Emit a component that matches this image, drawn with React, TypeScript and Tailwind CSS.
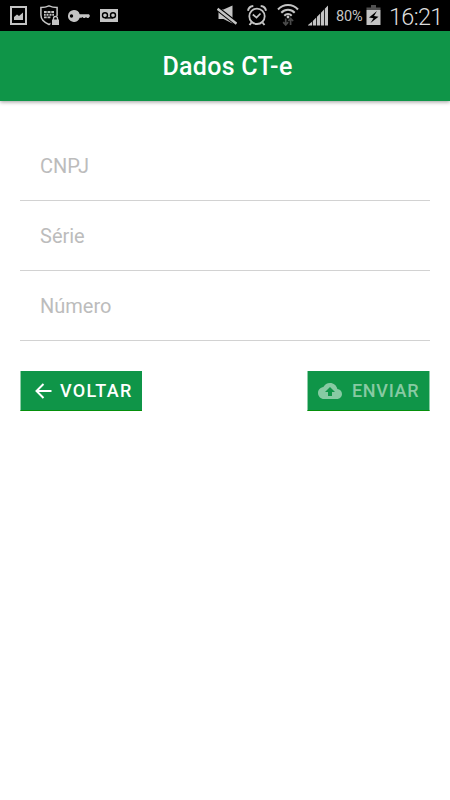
import * as React from "react";

const FIELDS = [
  { name: "cnpj", label: "CNPJ" },
  { name: "serie", label: "Série" },
  { name: "numero", label: "Número" },
];

function StatusBar() {
  return (
    <div className="flex h-[31px] items-start bg-black text-[#c4c4c4]">
      {/* notifications */}
      <svg className="ml-[10px] mt-[6px] h-[19px] w-[17px]" viewBox="0 0 17 19">
        <path d="M1 1h15v17H1z" fill="none" stroke="currentColor" strokeWidth="2" />
        <path d="M4 14V11l3-2.500 2 1.500 4-3.500V14z" fill="currentColor" />
      </svg>
      <svg className="ml-[13px] mt-[5px] h-[21px] w-[20px]" viewBox="0 0 20 21">
        <path
          d="M9 .9C6.500 2 3.500 2.500 .9 2.500V10c0 4 3.500 7.500 8.100 9.500 4.600-2 8.100-5.500 8.100-9.500V2.500C14.500 2.500 11.500 2 9 .9z"
          fill="none"
          stroke="currentColor"
          strokeWidth="1.500"
        />
        <path
          d="M4 6h2.700v2H4zM7.500 6h3v2h-3zM11.300 6H14v2h-2.700zM4 8.700h1.700v2H4zM6.500 8.700h2v2h-2zM9.500 8.700h2v2h-2zM12.300 8.700H14v2h-1.700zM4 11.400h2.700v1.800H4zM7.500 11.400h3v1.800h-3z"
          fill="currentColor"
        />
        <path d="M10.500 12.500h1.500v-1.500h6v2.500h2V21h-9.500z" fill="#000" />
        <path d="M12 14.500h7v5.500h-7z" fill="currentColor" />
        <path d="M13.500 15v-1.500a2 2 0 0 1 4 0V15" fill="none" stroke="currentColor" strokeWidth="1.300" />
      </svg>
      <svg className="ml-[8px] mt-[10px] h-[12px] w-[22px]" viewBox="0 0 22 12">
        <path
          fillRule="evenodd"
          d="M6 0a6 6 0 0 1 5.700 4.200H21L22 6l-1.500 2H19l-1-1-1 1h-1.500l-1-1-1 .8h-1.800A6 6 0 1 1 6 0zM3.500 4.300a1.700 1.700 0 1 0 0 3.400 1.700 1.700 0 0 0 0-3.400z"
          fill="currentColor"
        />
      </svg>
      <svg className="ml-[10px] mt-[9px] h-[13px] w-[18px]" viewBox="0 0 18 13">
        <path d="M0 0h18v13H0z" fill="currentColor" />
        <g fill="none" stroke="#000" strokeWidth="1.400">
          <circle cx="5" cy="6.300" r="2.500" />
          <circle cx="13" cy="6.300" r="2.500" />
          <path d="M5 8.900h8" />
        </g>
      </svg>

      {/* system */}
      <svg className="ml-[99px] mt-[5px] h-[21px] w-[20px]" viewBox="0 0 20 21">
        <path d="M1.500 4.500h5L15.500 .5V18.500L6.500 14h-5z" fill="currentColor" />
        <path d="M0 3.300L20 19" stroke="#000" strokeWidth="4.600" />
        <path d="M.5 3.800L19.500 18.700" stroke="currentColor" strokeWidth="2.400" />
      </svg>
      <svg className="ml-[10px] mt-[5px] h-[21px] w-[20px]" viewBox="0 0 20 21" fill="none" stroke="currentColor">
        <circle cx="10" cy="11.300" r="7.700" strokeWidth="1.800" />
        <path d="M5.800 9.500L9.500 12.500l4-4" strokeWidth="1.700" />
        <path d="M1 5.800C1.500 3 3.500 1.200 6.300 1M19 5.800C18.500 3 16.500 1.200 13.700 1M4.500 17.500L2.500 20M15.500 17.500l2 2.500" strokeWidth="2" />
      </svg>
      <svg className="ml-[10px] mt-[4px] h-[22px] w-[22px]" viewBox="0 0 22 22" fill="none">
        <g stroke="currentColor" strokeWidth="2">
          <path d="M1 5.500C6.500-.5 15.500-.5 21 5.500" />
          <path d="M4.300 8.700c3.800-4 9.600-4 13.400 0" />
          <path d="M7.300 11.700c2.200-2.200 5.200-2.200 7.400 0" />
        </g>
        <circle cx="11" cy="13" r="1.400" fill="currentColor" />
        <path d="M8.700 14.500v6.200M6.200 18.200l2.500 2.700 2.500-2.700M13.600 21v-6.200M11.300 17l2.300-2.600 2.500 2.600" stroke="#4a4a4a" strokeWidth="1.700" />
      </svg>
      <svg className="ml-[9px] mt-[5px] h-[21px] w-[20px]" viewBox="0 0 20 21">
        <path
          d="M0 20.500h4v-3.800l-4 3.300zM4.800 20.500h3.400v-8l-3.400 3.500zM9 20.500h3.200V8.500L9 11.700zM13 20.500h3V4.500l-3 3.200zM16.800 20.500H20V.5l-3.200 3.300z"
          fill="currentColor"
        />
      </svg>
      <span className="ml-[8px] mt-[7px] w-[28px] whitespace-nowrap font-[Roboto] text-[14.500px] leading-[19px] tracking-[-0.1px]">
        80%
      </span>
      <svg className="ml-[2px] mt-[5px] h-[20px] w-[15px]" viewBox="0 0 15 20">
        <path d="M5 0h5v2.500h4.500V5H.5V2.500H5z" fill="#505050" />
        <path d="M.5 5h14v15H.5z" fill="currentColor" />
        <path d="M11 6L3 12.500l4.500 .8-3 4.700 8-6.300-4.500-.8z" fill="#000" />
      </svg>
      <span className="ml-[8px] mt-[3px] whitespace-nowrap font-[Roboto] text-[23.500px] font-light leading-[28px] tracking-[-0.7px] text-[#dcdcdc]">
        16:21
      </span>
    </div>
  );
}

export default function App() {
  const [values, setValues] = React.useState<Record<string, string>>({});
  const complete = FIELDS.every((f) => values[f.name]);

  return (
    <main className="min-h-screen bg-white font-[Roboto,sans-serif]">
      <StatusBar />
      <header className="flex h-[70px] items-center justify-center bg-[#0f9548] pl-[5px] pt-[2px] shadow-[0_1px_4px_rgba(0,0,0,0.4)]">
        <h1 className="text-[25px] font-medium leading-[30px] tracking-[0.3px] text-white">Dados CT-e</h1>
      </header>

      <form className="px-5 pt-[30px]" onSubmit={(e) => e.preventDefault()}>
        {FIELDS.map((f) => (
          <input
            key={f.name}
            className="block h-[70px] w-full border-b border-[#d2d2d2] px-5 text-xl text-[#333] outline-none placeholder:text-[#bcbcbc]"
            placeholder={f.label}
            aria-label={f.label}
            value={values[f.name] ?? ""}
            onChange={(e) => setValues({ ...values, [f.name]: e.target.value })}
          />
        ))}

        <div className="mt-[30px] flex justify-between">
          <button
            type="button"
            className="flex h-10 w-[122px] items-center border-b border-l border-b-[#05900b] border-l-[#8fcea8] bg-[#0f9548] pl-[14px] text-lg font-medium tracking-[1.3px] text-white"
          >
            <svg className="mr-2 h-4 w-[17px] shrink-0" viewBox="0 0 17 16" fill="none" stroke="currentColor" strokeWidth="2">
              <path d="M16.500 8H1.800M8.500 1L1.500 8l7 7" />
            </svg>
            VOLTAR
          </button>
          <button
            type="submit"
            disabled={!complete}
            className="flex h-10 w-[123px] items-center border-x border-b border-b-[#05900b] border-x-[#8fcea8] bg-[#0f9548] pl-[10px] text-lg font-medium tracking-[0.7px] text-white disabled:text-[#87caa3]"
          >
            <svg className="mr-[10px] h-4 w-[24px] shrink-0" viewBox="0 4 24 16" fill="currentColor">
              <path d="M19.350 10.040C18.670 6.590 15.640 4 12 4 9.110 4 6.600 5.640 5.350 8.040 2.340 8.360 0 10.910 0 14c0 3.310 2.690 6 6 6h13c2.760 0 5-2.240 5-5 0-2.640-2.050-4.780-4.650-4.960zM14 13v4h-4v-4H7l5-5 5 5h-3z" />
            </svg>
            ENVIAR
          </button>
        </div>
      </form>
    </main>
  );
}
